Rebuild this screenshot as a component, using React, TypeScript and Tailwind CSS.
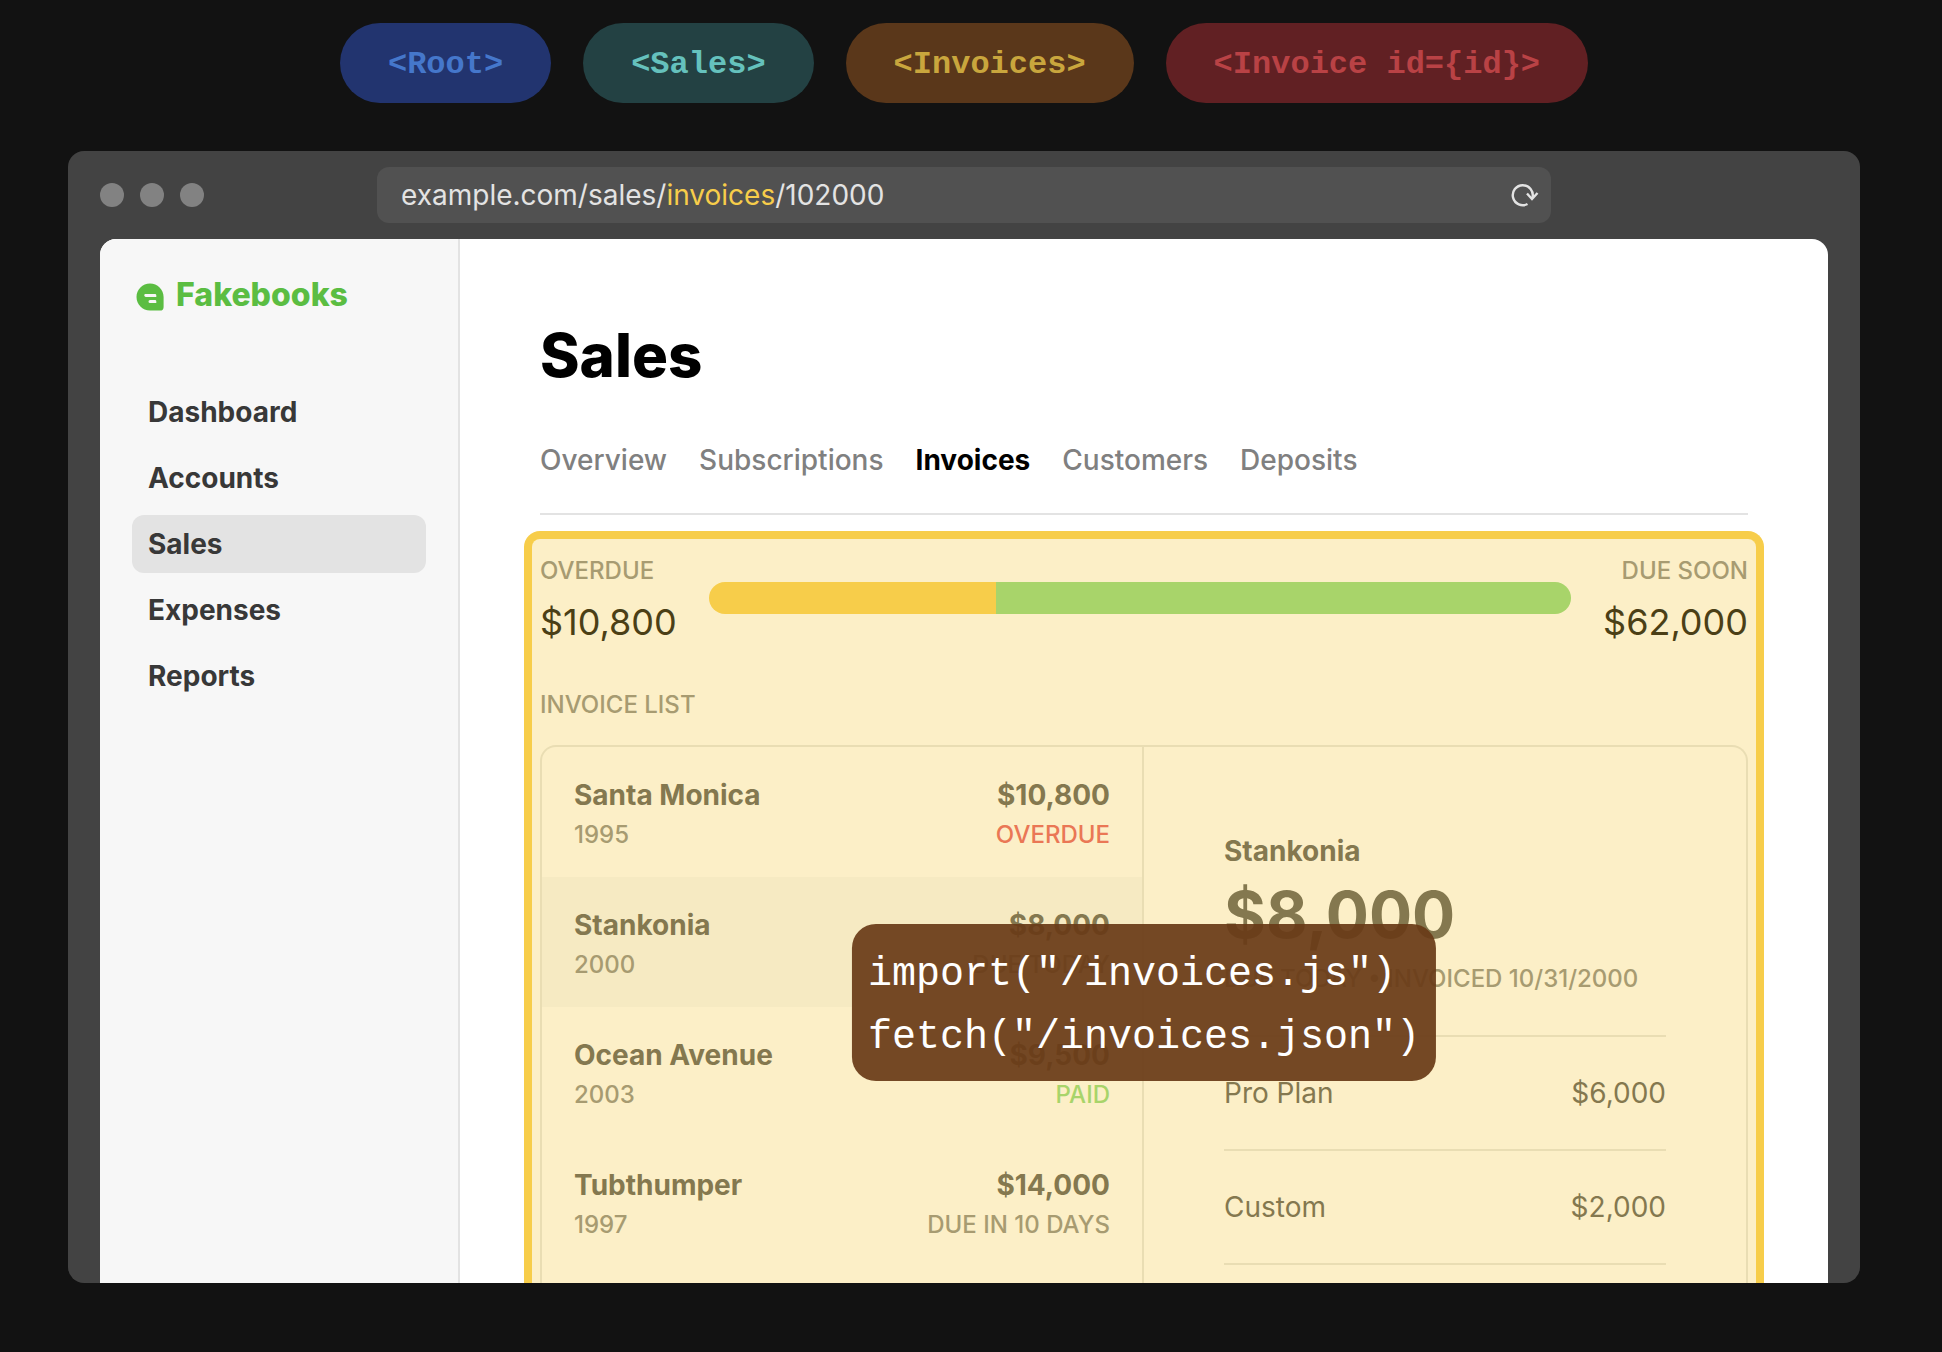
const pills = [
  { label: "<Root>", tone: "bg-[#22346f] text-[#4577cb]" },
  { label: "<Sales>", tone: "bg-[#234143] text-[#65c1bd]" },
  { label: "<Invoices>", tone: "bg-[#5a371a] text-[#c9a63d]" },
  { label: "<Invoice id={id}>", tone: "bg-[#612023] text-[#b94245]" },
];

const navItems = ["Dashboard", "Accounts", "Sales", "Expenses", "Reports"];
const tabs = ["Overview", "Subscriptions", "Invoices", "Customers", "Deposits"];

const invoices = [
  { name: "Santa Monica", year: "1995", amount: "$10,800", status: "OVERDUE", tone: "text-[#ea7755]" },
  { name: "Stankonia", year: "2000", amount: "$8,000", status: "DUE TODAY", tone: "text-[#a79b71]", active: true },
  { name: "Ocean Avenue", year: "2003", amount: "$9,500", status: "PAID", tone: "text-[#a8d46a]" },
  { name: "Tubthumper", year: "1997", amount: "$14,000", status: "DUE IN 10 DAYS", tone: "text-[#a79b71]" },
];

const lineItems = [
  { name: "Pro Plan", price: "$6,000" },
  { name: "Custom", price: "$2,000" },
];

function Logo() {
  return (
    <svg viewBox="0 0 28 28" className="mt-1 size-7" aria-hidden="true">
      <path
        fillRule="evenodd"
        fill="#5bbd42"
        d="M14 .5C6.500.5.500 6.500.500 14S6.500 27.500 14 27.500H24a3.600 3.600 0 0 0 3.600-3.600V14C27.600 6.500 21.500.5 14 .5ZM8.800 11h10.200a1.300 1.300 0 0 1 1.300 1.300V14H9.800A2 2 0 0 1 8.800 11ZM14 17h5a1.300 1.300 0 0 1 1.300 1.300V20H14a1.500 1.500 0 0 1 0-3Z"
      />
    </svg>
  );
}

function ReloadIcon() {
  return (
    <svg viewBox="0 0 28 28" className="size-7" fill="none" stroke="#e3e3e3" strokeWidth="2.400" aria-hidden="true">
      <path d="M16.500 23A10 10 0 1 1 21.500 16.500" />
      <path d="M16 12.500l5 5.500L26.500 12" />
    </svg>
  );
}

function TitleBar() {
  return (
    <div className="grid h-22 shrink-0 grid-cols-[277px_1fr_277px] items-center">
      <div className="flex gap-4">
        <span className="size-6 rounded-full bg-[#828282]" />
        <span className="size-6 rounded-full bg-[#828282]" />
        <span className="size-6 rounded-full bg-[#828282]" />
      </div>
      <div className="flex h-14 items-center justify-between rounded-xl bg-[#515151] pr-3 pl-6 text-[28px] text-[#e3e3e3]">
        <span>
          example.com/sales/<span className="text-[#f7cd4a]">invoices</span>/102000
        </span>
        <button type="button" aria-label="Reload">
          <ReloadIcon />
        </button>
      </div>
    </div>
  );
}

function Sidebar() {
  return (
    <aside className="w-90 shrink-0 border-r-2 border-[#e3e3e3] bg-[#f7f7f7] px-8 pt-9">
      <a href="#home" className="flex items-center gap-3 pl-1 text-[32px] leading-10 font-extrabold text-[#5bbd42]">
        <Logo />
        Fakebooks
      </a>
      <nav className="mt-17 flex flex-col gap-2">
        {navItems.map((item) => (
          <a
            key={item}
            href={"#" + item.toLowerCase()}
            className={
              "flex h-[58px] items-center rounded-xl px-4 text-[28px] font-bold text-[#383838] " +
              (item === "Sales" ? "bg-[#e3e3e3]" : "")
            }
          >
            {item}
          </a>
        ))}
      </nav>
    </aside>
  );
}

function Summary() {
  return (
    <div className="flex">
      <div>
        <div className="text-2xl leading-8 font-medium text-[#a79b71]">OVERDUE</div>
        <div className="mt-3 text-4xl leading-[46px] text-[#4b3f16]">$10,800</div>
      </div>
      <div className="mx-8 mt-[27px] flex h-8 flex-1 overflow-hidden rounded-full">
        <div className="w-1/3 bg-[#f7cd4a]" />
        <div className="flex-1 bg-[#a8d46a]" />
      </div>
      <div className="text-right">
        <div className="text-2xl leading-8 font-medium text-[#a79b71]">DUE SOON</div>
        <div className="mt-3 text-4xl leading-[46px] text-[#4b3f16]">$62,000</div>
      </div>
    </div>
  );
}

function InvoiceList() {
  return (
    <div className="border-r-2 border-[#e9ddb3]">
      {invoices.map((inv) => (
        <a
          key={inv.name}
          href={"#" + inv.year}
          className={"flex justify-between px-8 pt-8 pb-[26px] " + (inv.active ? "bg-[#f6eac2]" : "")}
        >
          <div>
            <div className="text-[28px] leading-8 font-bold text-[#84784f]">{inv.name}</div>
            <div className="mt-2 text-2xl leading-8 font-medium text-[#a79b71]">{inv.year}</div>
          </div>
          <div className="text-right">
            <div className="text-[28px] leading-8 font-bold text-[#84784f]">{inv.amount}</div>
            <div className={"mt-2 text-2xl leading-8 font-medium " + inv.tone}>{inv.status}</div>
          </div>
        </a>
      ))}
    </div>
  );
}

function InvoiceDetail() {
  return (
    <div className="px-20 pt-22 text-[#84784f]">
      <div className="text-[28px] leading-8 font-bold">Stankonia</div>
      <div className="mt-3 text-[64px] leading-18 font-bold">$8,000</div>
      <div className="mt-3 text-2xl leading-8 font-medium whitespace-nowrap text-[#a79b71]">
        DUE TODAY • INVOICED 10/31/2000
      </div>
      <ul className="mt-10">
        {lineItems.map((item) => (
          <li
            key={item.name}
            className="flex justify-between border-t-2 border-[#e9ddb3] py-10 text-[28px] leading-8 last:border-b-2"
          >
            <span>{item.name}</span>
            <span>{item.price}</span>
          </li>
        ))}
      </ul>
    </div>
  );
}

function ImportPopup() {
  return (
    <pre className="absolute top-[385px] left-1/2 -translate-x-1/2 rounded-3xl bg-[rgba(105,59,24,0.93)] px-4 pt-[19px] pb-3 font-['Liberation_Mono',monospace] text-[40px] leading-[63px] text-white">
      {'import("/invoices.js")\nfetch("/invoices.json")'}
    </pre>
  );
}

export default function App() {
  return (
    <div className="flex h-screen flex-col overflow-hidden bg-[#121212] pt-[23px] pr-[82px] pb-[69px] pl-[68px] font-['Inter',sans-serif]">
      <div className="flex shrink-0 justify-center gap-8">
        {pills.map((pill) => (
          <div
            key={pill.label}
            className={
              "flex h-20 items-center rounded-full px-12 pt-1 font-['Liberation_Mono',monospace] text-[32px] font-bold whitespace-pre " +
              pill.tone
            }
          >
            {pill.label}
          </div>
        ))}
      </div>

      <div className="mt-12 flex min-h-0 flex-1 flex-col overflow-hidden rounded-2xl bg-[#434343] px-8">
        <TitleBar />
        <div className="flex min-h-0 flex-1 overflow-hidden rounded-t-2xl bg-white">
          <Sidebar />
          <main className="flex min-w-0 flex-1 flex-col px-16 pt-20">
            <div className="px-4">
              <h1 className="text-[60px] leading-18 font-extrabold text-black">Sales</h1>
              <nav className="mt-12 flex gap-8 border-b-2 border-[#e3e3e3] pb-8 text-[28px] leading-[42px] text-[#808080]">
                {tabs.map((tab) => (
                  <a
                    key={tab}
                    href={"#" + tab.toLowerCase()}
                    className={tab === "Invoices" ? "font-bold text-black" : "font-medium"}
                  >
                    {tab}
                  </a>
                ))}
              </nav>
            </div>
            <section className="relative mt-4 flex flex-1 flex-col rounded-t-2xl border-8 border-b-0 border-[#f7cd4a] bg-[#fcefc7] px-2 pt-4">
              <Summary />
              <h2 className="mt-11 text-2xl leading-8 font-medium text-[#a79b71]">INVOICE LIST</h2>
              <div className="mt-6 grid flex-1 grid-cols-2 rounded-t-2xl border-2 border-b-0 border-[#e9ddb3]">
                <InvoiceList />
                <InvoiceDetail />
              </div>
              <ImportPopup />
            </section>
          </main>
        </div>
      </div>
    </div>
  );
}
